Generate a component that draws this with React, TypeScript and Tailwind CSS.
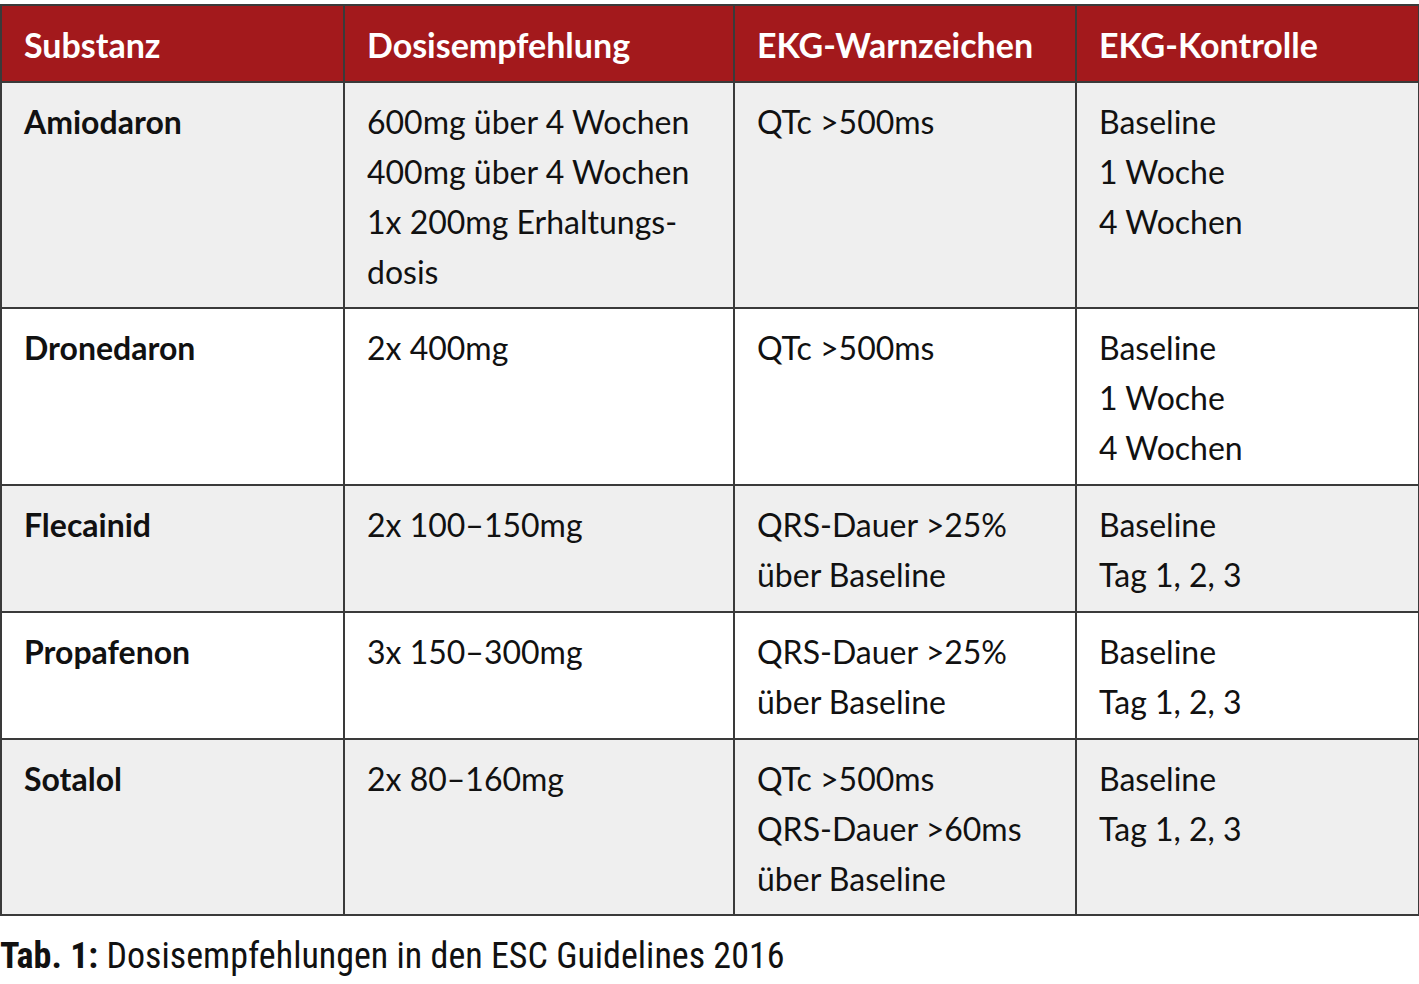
import React from "react";

type Row = { name: string; dose: string[]; warn: string[]; ctrl: string[]; h: string };

const rows: Row[] = [
  {
    name: "Amiodaron",
    dose: ["600mg über 4 Wochen", "400mg über 4 Wochen", "1x 200mg Erhaltungs-", "dosis"],
    warn: ["QTc >500ms"],
    ctrl: ["Baseline", "1 Woche", "4 Wochen"],
    h: "h-[226px]",
  },
  {
    name: "Dronedaron",
    dose: ["2x 400mg"],
    warn: ["QTc >500ms"],
    ctrl: ["Baseline", "1 Woche", "4 Wochen"],
    h: "h-[177px]",
  },
  {
    name: "Flecainid",
    dose: ["2x 100–150mg"],
    warn: ["QRS-Dauer >25%", "über Baseline"],
    ctrl: ["Baseline", "Tag 1, 2, 3"],
    h: "h-[127px]",
  },
  {
    name: "Propafenon",
    dose: ["3x 150–300mg"],
    warn: ["QRS-Dauer >25%", "über Baseline"],
    ctrl: ["Baseline", "Tag 1, 2, 3"],
    h: "h-[127px]",
  },
  {
    name: "Sotalol",
    dose: ["2x 80–160mg"],
    warn: ["QTc >500ms", "QRS-Dauer >60ms", "über Baseline"],
    ctrl: ["Baseline", "Tag 1, 2, 3"],
    h: "h-[176px]",
  },
];

function Lines({ items }: { items: string[] }) {
  return (
    <>
      {items.map((t, i) => (
        <div key={i}>{t}</div>
      ))}
    </>
  );
}

const cell =
  "border-2 border-[#3a3a3a] align-top px-[22px] pt-[14px] pb-[10px] text-[32px] leading-[50px]";

export default function App() {
  const font = { fontFamily: "Lato, 'Open Sans', sans-serif" };
  return (
    <div className="bg-white w-[1419px] h-[984px] pt-[4px] text-[#111]" style={font}>
      <table className="border-collapse w-[1418px] table-fixed">
        <colgroup>
          <col className="w-[343px]" />
          <col className="w-[390px]" />
          <col className="w-[342px]" />
          <col className="w-[343px]" />
        </colgroup>
        <thead>
          <tr className="bg-[#a3191c] text-white h-[77px]">
            {["Substanz", "Dosisempfehlung", "EKG-Warnzeichen", "EKG-Kontrolle"].map((h) => (
              <th
                key={h}
                className="border-2 border-[#3a3a3a] text-left align-middle px-[22px] text-[34px] font-bold leading-none pt-[2px]"
              >
                {h}
              </th>
            ))}
          </tr>
        </thead>
        <tbody>
          {rows.map((r, i) => (
            <tr key={r.name} className={(i % 2 === 0 ? "bg-[#efefef] " : "bg-white ") + r.h}>
              <td className={cell + " font-bold"}>{r.name}</td>
              <td className={cell}>
                <Lines items={r.dose} />
              </td>
              <td className={cell}>
                <Lines items={r.warn} />
              </td>
              <td className={cell}>
                <Lines items={r.ctrl} />
              </td>
            </tr>
          ))}
        </tbody>
      </table>
      <div
        className="mt-[20px] text-[36px] leading-[40px]"
        style={{ fontFamily: "'Roboto Condensed', Roboto, sans-serif" }}
      >
        <span className="font-bold">Tab. 1:</span> Dosisempfehlungen in den ESC Guidelines 2016
      </div>
    </div>
  );
}
